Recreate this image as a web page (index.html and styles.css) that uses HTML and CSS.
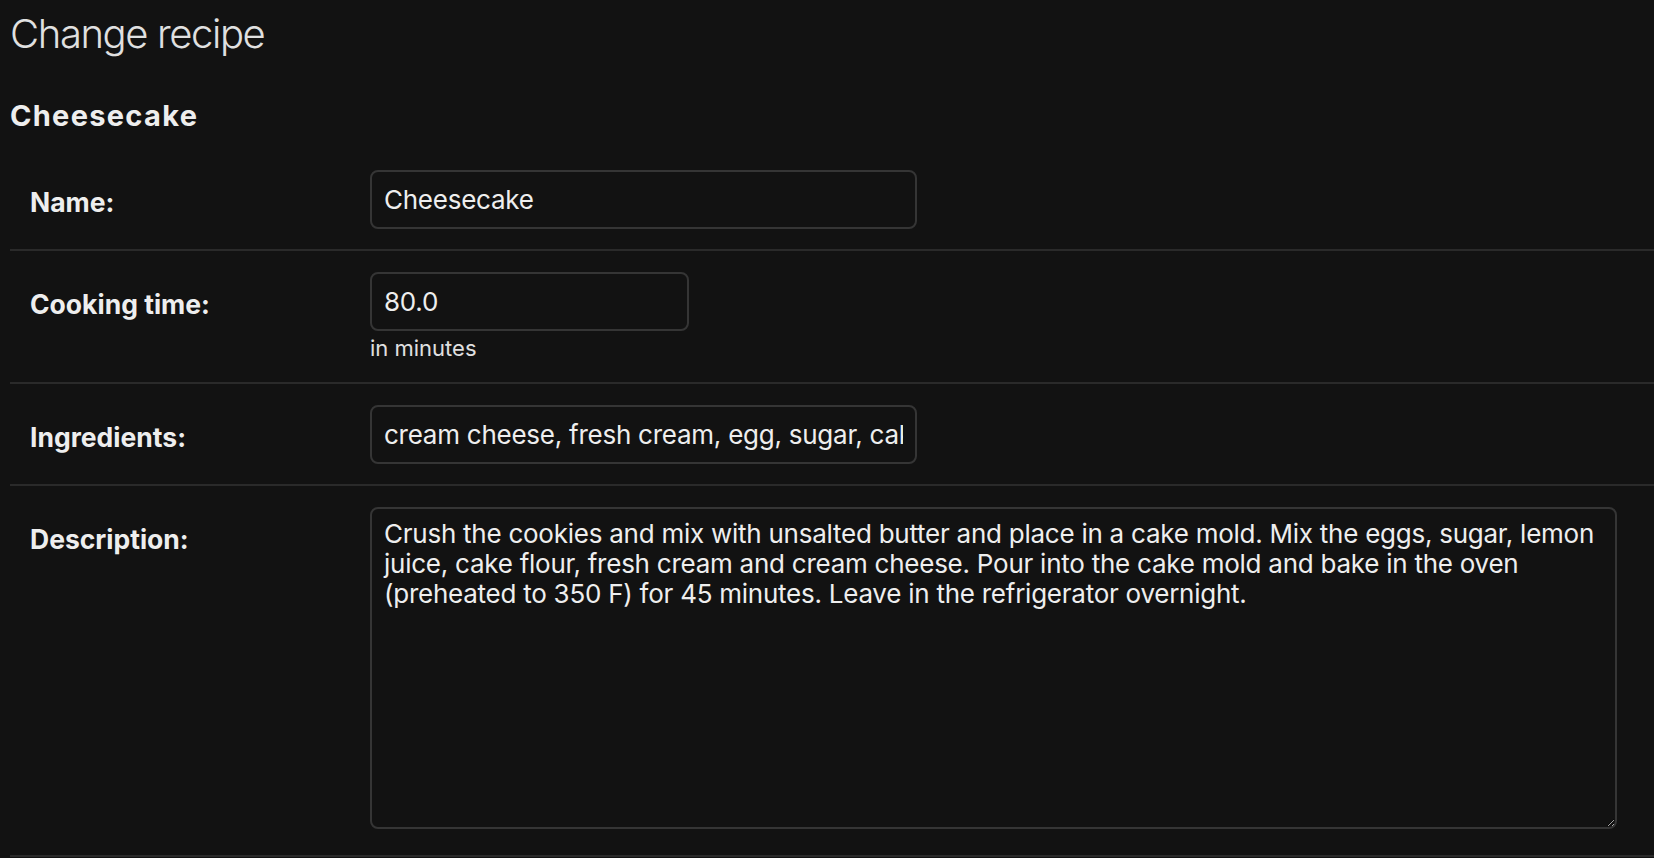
FILE: index.html
```html
<!DOCTYPE html>
<html lang="en">
<head>
<meta charset="utf-8">
<title>Change recipe</title>
<link rel="stylesheet" href="styles.css">
</head>
<body>
<div class="content">
  <h1 class="title">Change recipe</h1>
  <h2 class="subtitle">Cheesecake</h2>
  <form class="form">
    <fieldset class="fieldset">
      <div class="form-row">
        <label class="label" for="id_name">Name:</label>
        <div class="field">
          <input class="text-input wide" type="text" id="id_name" value="Cheesecake">
        </div>
      </div>
      <div class="form-row help-row">
        <label class="label" for="id_cooking_time">Cooking time:</label>
        <div class="field">
          <input class="text-input short" type="text" id="id_cooking_time" value="80.0">
          <div class="help">in minutes</div>
        </div>
      </div>
      <div class="form-row">
        <label class="label" for="id_ingredients">Ingredients:</label>
        <div class="field">
          <input class="text-input wide" type="text" id="id_ingredients" value="cream cheese, fresh cream, egg, sugar, cake flour, lemon juice, cookies, unsalted butter">
        </div>
      </div>
      <div class="form-row area-row">
        <label class="label" for="id_description">Description:</label>
        <div class="field">
          <textarea class="textarea" id="id_description">Crush the cookies and mix with unsalted butter and place in a cake mold. Mix the eggs, sugar, lemon juice, cake flour, fresh cream and cream cheese. Pour into the cake mold and bake in the oven (preheated to 350 F) for 45 minutes. Leave in the refrigerator overnight.</textarea>
        </div>
      </div>
    </fieldset>
  </form>
</div>
</body>
</html>
```

FILE: styles.css
```css
:root {
  color-scheme: dark;
}
html, body {
  margin: 0;
  padding: 0;
  background: #121212;
  color: #eeeeee;
  font-family: Inter, "Noto Sans", "Liberation Sans", sans-serif;
}
.content {
  padding: 10px 0 0 10px;
}
.title {
  margin: 0;
  font-size: 40px;
  font-weight: 300;
  line-height: 48px;
  letter-spacing: -1.4px;
  color: #e0e0e0;
}
.subtitle {
  margin: 41px 0 0;
  font-size: 29px;
  font-weight: 700;
  line-height: 34px;
  letter-spacing: 1.3px;
  color: #eeeeee;
}
.form {
  margin: 16px 0 0;
}
.fieldset {
  margin: 0;
  padding: 0;
  border: 0;
  min-width: 0;
}
.form-row {
  display: flex;
  align-items: flex-start;
  padding: 21px 20px 20px;
  border-bottom: 2px solid #2a2a2a;
}
.help-row {
  padding-bottom: 23px;
}
.area-row {
  padding-bottom: 26px;
}
.label {
  flex: 0 0 auto;
  width: 320px;
  padding: 15px 20px 0 0;
  font-size: 26.5px;
  font-weight: 700;
  line-height: 34px;
  color: #eeeeee;
}
.field {
  display: flex;
  flex-direction: column;
  align-items: flex-start;
}
.text-input,
.textarea {
  box-sizing: border-box;
  margin: 0;
  border: 2px solid #353535;
  border-radius: 8px;
  background: #121212;
  color: #eeeeee;
  font-family: Inter, "Noto Sans", "Liberation Sans", sans-serif;
  font-size: 26px;
  letter-spacing: -0.25px;
  padding: 10px 12px;
  outline: none;
}
.text-input {
  height: 59px;
}
.wide {
  width: 547px;
}
.short {
  width: 319px;
}
.textarea {
  display: block;
  width: 1247px;
  height: 322px;
  line-height: 30px;
  padding-top: 10px;
  resize: vertical;
}
.help {
  margin-top: 6px;
  font-size: 22px;
  line-height: 22px;
  color: #e0e0e0;
}
```
